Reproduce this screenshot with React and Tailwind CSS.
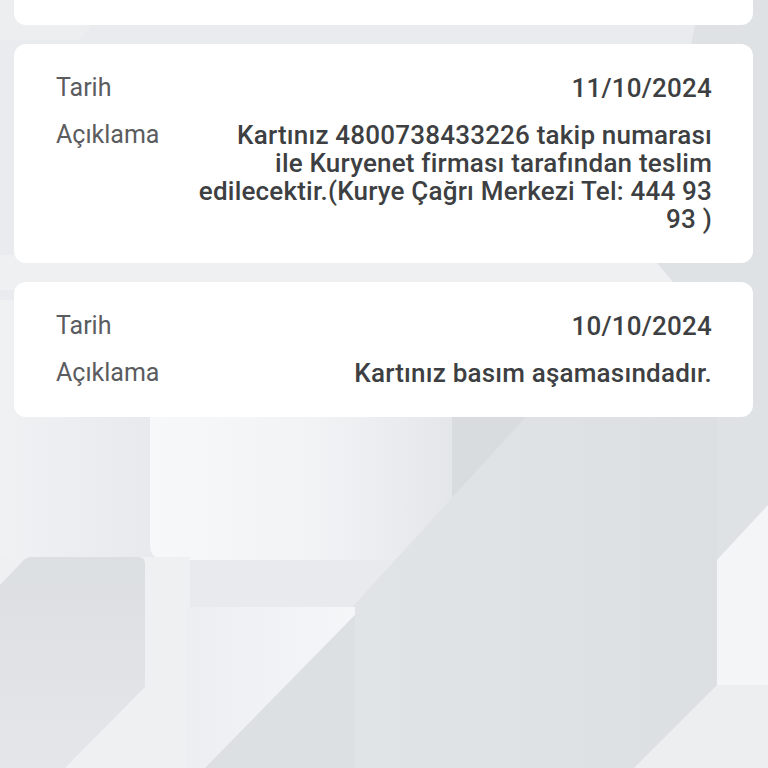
import React from "react";

function Background() {
  return (
    <svg
      className="[grid-area:1/1] w-[768px] h-[768px]"
      width="768"
      height="768"
      viewBox="0 0 768 768"
      preserveAspectRatio="none"
    >
      <defs>
        <linearGradient id="lgL2" x1="0" y1="0" x2="1" y2="0">
          <stop offset="0" stopColor="#f7f8fa" />
          <stop offset="0.5" stopColor="#f2f3f5" />
          <stop offset="1" stopColor="#e2e5e8" />
        </linearGradient>
        <linearGradient id="lgL1" x1="0" y1="0" x2="1" y2="0">
          <stop offset="0" stopColor="#eff1f3" />
          <stop offset="1" stopColor="#e7e9ec" />
        </linearGradient>
        <linearGradient id="lgD2" x1="0" y1="0" x2="0" y2="1">
          <stop offset="0" stopColor="#dcdfe2" />
          <stop offset="1" stopColor="#e4e6e9" />
        </linearGradient>
        <linearGradient id="lgL3" x1="0" y1="0" x2="1" y2="0">
          <stop offset="0" stopColor="#eceef1" />
          <stop offset="1" stopColor="#f5f6f8" />
        </linearGradient>
        <linearGradient id="lgP" x1="0" y1="0" x2="1" y2="0">
          <stop offset="0" stopColor="#e3e6e8" />
          <stop offset="1" stopColor="#dcdfe2" />
        </linearGradient>
      </defs>
      <rect x="0" y="0" width="768" height="768" fill="#dfe2e5" />
      {/* upper light band */}
      <polygon points="0,0 700,0 640,300 90,300 0,380" fill="#e9ebee" />
      <polygon points="0,0 110,0 80,40 0,40" fill="#eceef0" />
      <polygon points="0,255 650,255 680,290 0,290" fill="#eef0f2" />
      {/* left light column */}
      <rect x="0" y="300" width="160" height="300" fill="url(#lgL1)" />
      {/* main light shape */}
      <path d="M150 300 H470 V560 H166 Q150 560 150 544 Z" fill="url(#lgL2)" />
      {/* band below light shape */}
      <rect x="150" y="560" width="320" height="48" fill="#e8eaed" />
      {/* dark rounded rect */}
      <path d="M452 300 H700 V597 H462 Q452 597 452 587 Z" fill="#d9dcdf" />
      {/* big diagonal plane */}
      <polygon points="545,396 717,396 717,560 768,505 768,768 205,768" fill="url(#lgP)" />
      {/* right light shapes */}
      <polygon points="717,560 768,505 768,688 717,688" fill="#f4f5f7" />
      <polygon points="717,685 768,685 768,768 634,768" fill="#eceef0" />
      {/* left bottom light base */}
      <rect x="0" y="557" width="190" height="211" fill="#eef0f2" />
      {/* dark left bottom shape */}
      <path d="M0 585 L22 562 Q26 557 32 557 H138 Q145 557 145 564 V687 L65 768 H0 Z" fill="url(#lgD2)" />
      {/* lower middle light */}
      <polygon points="187,607 355,607 355,615 205,768 187,768" fill="url(#lgL3)" />
      <polygon points="355,615 355,768 205,768" fill="#dde0e3" />
    </svg>
  );
}

function Row({ label, children }) {
  return (
    <div className="flex items-start justify-between gap-4">
      <div className="shrink-0 text-[25px] leading-[28px] text-[#5a5c5f]">{label}</div>
      <div className="text-right text-[26px] leading-[28px] tracking-[0.2px] font-medium text-[#3d3f42] whitespace-pre-line">
        {children}
      </div>
    </div>
  );
}

function Card({ date, desc }) {
  return (
    <div className="ml-[14px] mr-[15px] rounded-[12px] bg-white pl-[42px] pr-[41px] py-[30px] flex flex-col gap-[19px]">
      <Row label="Tarih">{date}</Row>
      <Row label="Açıklama">{desc}</Row>
    </div>
  );
}

export default function App() {
  return (
    <div
      className="grid w-[768px] h-[768px] overflow-hidden"
      style={{ fontFamily: "Roboto, 'Noto Sans', sans-serif" }}
    >
      <Background />
      <div className="[grid-area:1/1] flex flex-col gap-[19px]">
        <div className="ml-[14px] mr-[15px] h-[25px] rounded-b-[12px] bg-white" />
        <Card
          date="11/10/2024"
          desc={
            "Kartınız 4800738433226 takip numarası\nile Kuryenet firması tarafından teslim\nedilecektir.(Kurye Çağrı Merkezi Tel: 444 93\n93 )"
          }
        />
        <Card date="10/10/2024" desc="Kartınız basım aşamasındadır." />
      </div>
    </div>
  );
}
